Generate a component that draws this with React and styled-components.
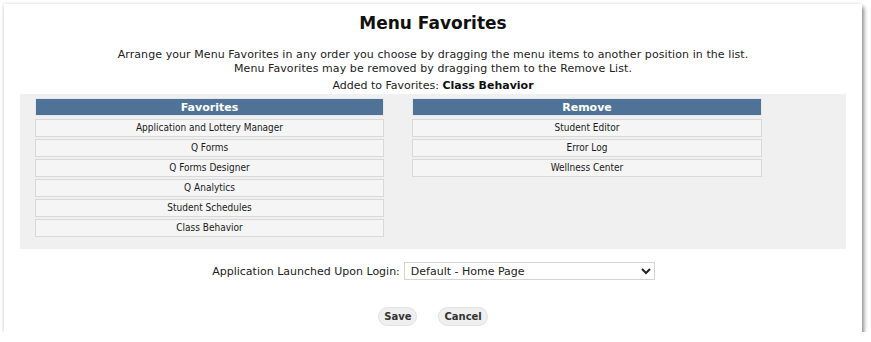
import React from 'react';
import styled, { createGlobalStyle } from 'styled-components';

const GlobalStyle = createGlobalStyle`
  html, body {
    margin: 0;
    padding: 0;
    background: #ffffff;
  }
  body {
    font-family: "DejaVu Sans", Verdana, sans-serif;
    color: #222;
  }
`;

const Card = styled.div`
  box-sizing: border-box;
  margin: 4px 0 0 4px;
  width: 858px;
  height: 328px;
  background: #fff;
  box-shadow: 2px 3px 4px rgba(0, 0, 0, 0.45), -1px -1px 3px rgba(0, 0, 0, 0.08);
  padding-top: 9px;
`;

const Title = styled.h2`
  margin: 0;
  text-align: center;
  font-size: 17px;
  line-height: 20px;
  font-weight: bold;
  color: #111;
`;

const Intro = styled.p`
  margin: 15px 0 0;
  text-align: center;
  font-size: 11px;
  line-height: 14px;
  letter-spacing: 0.08px;
  color: #222;
`;

const Added = styled.p`
  margin: 3px 0 0;
  text-align: center;
  font-size: 11px;
  line-height: 14px;

  b {
    font-weight: bold;
    color: #111;
  }
`;

const Panel = styled.div`
  box-sizing: border-box;
  margin: 1px 0 0 16px;
  width: 826px;
  height: 155px;
  background: #f0f0f0;
  padding: 4px 0 0 15px;
  display: grid;
  grid-template-columns: 349px 350px;
  column-gap: 28px;
  align-items: start;
`;

const Column = styled.div`
  display: flex;
  flex-direction: column;
  gap: 2px;
`;

const ColumnHeader = styled.div`
  height: 18px;
  margin-bottom: 1px;
  background: #4f7396;
  border: 1px solid #e4e8ec;
  box-sizing: border-box;
  color: #fff;
  font-weight: bold;
  font-size: 11px;
  line-height: 17px;
  text-align: center;
`;

const Item = styled.div`
  box-sizing: border-box;
  height: 18px;
  background: #f5f5f5;
  border: 1px solid #d9d9d9;
  font-family: "DejaVu Sans Condensed", "DejaVu Sans", sans-serif;
  font-size: 10px;
  line-height: 16px;
  text-align: center;
  color: #1a1a1a;
`;

const LoginRow = styled.div`
  margin-top: 13px;
  display: flex;
  justify-content: center;
  align-items: center;
  gap: 4px;
  font-size: 11px;
  padding-left: 1px;
`;

const Select = styled.select`
  width: 251px;
  height: 18px;
  box-sizing: border-box;
  font-family: "DejaVu Sans", Verdana, sans-serif;
  font-size: 11px;
  color: #222;
  background: #fff;
  border: 1px solid #d4d4d4;
  padding: 0 2px;
  border-radius: 0;
`;

const Buttons = styled.div`
  margin-top: 27px;
  display: flex;
  justify-content: center;
  gap: 21px;
`;

const Button = styled.button`
  height: 19px;
  padding: 0 5px;
  border: 1px solid #e2e2e2;
  border-radius: 10px;
  background: #efefef;
  font-family: "DejaVu Sans", Verdana, sans-serif;
  font-size: 10px;
  font-weight: bold;
  color: #333;
`;

const favorites = [
  'Application and Lottery Manager',
  'Q Forms',
  'Q Forms Designer',
  'Q Analytics',
  'Student Schedules',
  'Class Behavior',
];

const removed = ['Student Editor', 'Error Log', 'Wellness Center'];

const List = ({ title, items }) => (
  <Column>
    <ColumnHeader>{title}</ColumnHeader>
    {items.map((name) => <Item key={name}>{name}</Item>)}
  </Column>
);

export default function App() {
  return <>
    <GlobalStyle />
    <Card>
      <Title>Menu Favorites</Title>
      <Intro>
        Arrange your Menu Favorites in any order you choose by dragging the menu items to another position in the list.
        <br />
        Menu Favorites may be removed by dragging them to the Remove List.
      </Intro>
      <Added>Added to Favorites: <b>Class Behavior</b></Added>

      <Panel>
        <List title="Favorites" items={favorites} />
        <List title="Remove" items={removed} />
      </Panel>

      <LoginRow>
        <label htmlFor="startApp">Application Launched Upon Login:</label>
        <Select id="startApp" defaultValue="home">
          <option value="home">Default - Home Page</option>
        </Select>
      </LoginRow>

      <Buttons>
        <Button>Save</Button>
        <Button>Cancel</Button>
      </Buttons>
    </Card>
  </>;
}
